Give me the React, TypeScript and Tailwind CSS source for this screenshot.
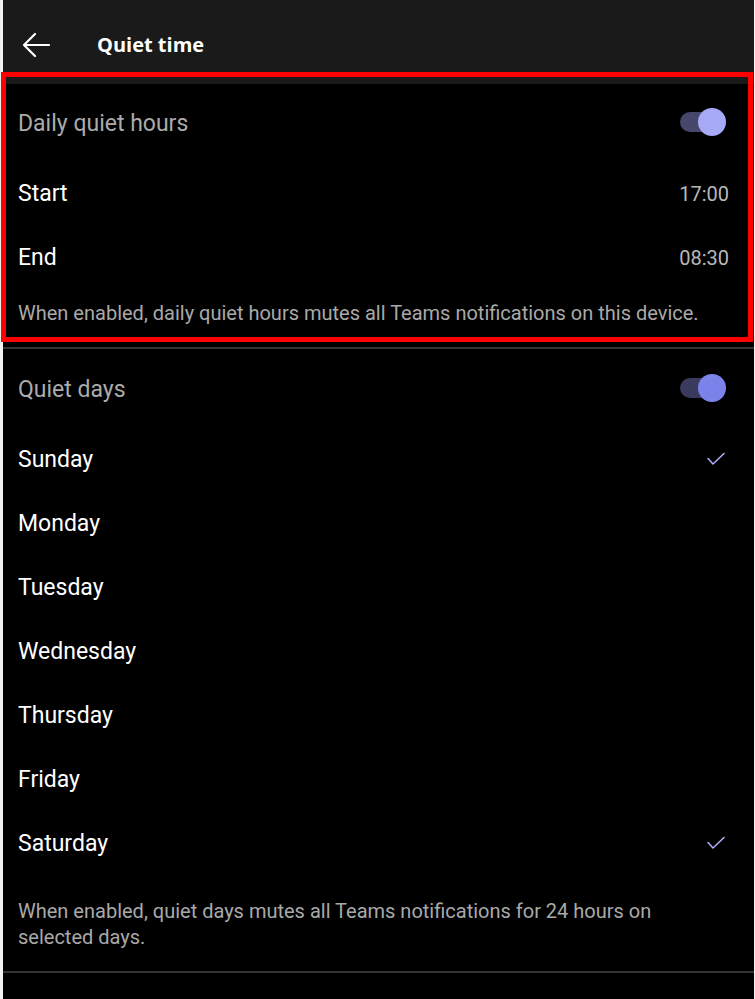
import React from "react";

const days = [
  { name: "Sunday", on: true },
  { name: "Monday", on: false },
  { name: "Tuesday", on: false },
  { name: "Wednesday", on: false },
  { name: "Thursday", on: false },
  { name: "Friday", on: false },
  { name: "Saturday", on: true },
];

const Toggle = ({ track, thumb }: { track: string; thumb: string }) => (
  <div className="relative w-[46px] h-[28px] flex items-center">
    <div className={`w-[40px] h-[20px] rounded-full ${track}`} />
    <div className={`absolute right-0 top-0 w-[28px] h-[28px] rounded-full ${thumb}`} />
  </div>
);

const Check = () => (
  <svg width="20" height="14" viewBox="0 0 20 14" fill="none" className="mr-[3px] -mt-[3px]">
    <path d="M2 6.5 L7 12 L18 1.5" stroke="#a9adf3" strokeWidth="1.6" strokeLinecap="round" strokeLinejoin="round" />
  </svg>
);

const Row = ({ label, children }: { label: string; children?: React.ReactNode }) => (
  <div className="h-[64px] flex items-center justify-between pt-[4px] pl-[15px] pr-[25px]">
    <span className="text-[23px] text-white">{label}</span>
    {children}
  </div>
);

export default function App() {
  return (
    <div className="w-[755px] h-[999px] bg-[#f2f2f2] pl-[3px] pr-[1px] overflow-hidden" style={{ fontFamily: "Roboto, 'Noto Sans', sans-serif" }}>
      <div className="relative h-full bg-black">
        {/* top app bar */}
        <header className="h-[84px] bg-[#1a1a1a] flex items-start pt-[30px] px-[19px] text-white">
          <svg width="28" height="26" viewBox="0 0 28 26" fill="none" className="mt-[2px]">
            <path d="M27 13 H2 M13 2 L2 13 L13 24" stroke="#fff" strokeWidth="2.2" strokeLinecap="round" strokeLinejoin="round" />
          </svg>
          <h1 className="ml-[47px] text-[20px] leading-[30px] font-bold" style={{ fontFamily: "'Open Sans', 'Noto Sans', sans-serif" }}>
            Quiet time
          </h1>
        </header>

        {/* daily quiet hours */}
        <section className="pt-[6px]">
          <div className="h-[64px] flex items-center justify-between pl-[15px] pr-[28px]">
            <span className="text-[23px] text-[#ababab] pt-[4px]">Daily quiet hours</span>
            <Toggle track="bg-[#46476a]" thumb="bg-[#a6aaf6]" />
          </div>
          <div className="h-[6px]" />
          <Row label="Start">
            <span className="text-[20px] text-[#b8b8b8]">17:00</span>
          </Row>
          <Row label="End">
            <span className="text-[20px] text-[#b8b8b8]">08:30</span>
          </Row>
          <p className="pt-[12px] pb-[21px] pl-[15px] pr-[20px] text-[20px] leading-[26px] text-[#a9a9a9]">
            When enabled, daily quiet hours mutes all Teams notifications on this device.
          </p>
        </section>
        <div className="h-[2px] bg-[#333333]" />

        {/* quiet days */}
        <section className="pt-[7px]">
          <div className="h-[64px] flex items-center justify-between pl-[15px] pr-[28px]">
            <span className="text-[23px] text-[#ababab] pt-[4px]">Quiet days</span>
            <Toggle track="bg-[#3a3b5c]" thumb="bg-[#7b83ea]" />
          </div>
          <div className="h-[6px]" />
          {days.map((d) => (
            <Row key={d.name} label={d.name}>
              {d.on && <Check />}
            </Row>
          ))}
          <p className="pt-[24px] pb-[21px] pl-[15px] pr-[40px] text-[20px] leading-[26px] text-[#a9a9a9]">
            When enabled, quiet days mutes all Teams notifications for 24 hours on selected days.
          </p>
        </section>
        <div className="h-[2px] bg-[#333333]" />

        {/* highlight frame */}
        <div className="absolute left-[-2px] top-[72px] w-[752px] h-[270px] border-[5px] border-[#ff0000] pointer-events-none" />
      </div>
    </div>
  );
}
